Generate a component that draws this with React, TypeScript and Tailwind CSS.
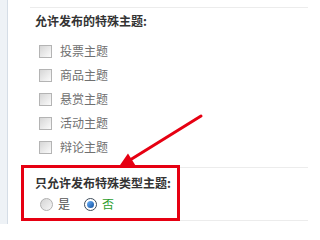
import React from 'react';

const topics = ['投票主题', '商品主题', '悬赏主题', '活动主题', '辩论主题'];

const Checkbox = () => (
  <span className="inline-block w-[13px] h-[13px] border border-[#b4b4b4] bg-gradient-to-br from-[#d6d6d6] to-[#fbfbfb] shrink-0" />
);

const Radio = ({ checked }: { checked?: boolean }) => (
  <span
    className={`flex items-center justify-center w-[13px] h-[13px] rounded-full border shrink-0 ${
      checked ? 'border-[#3d4b5a] bg-white' : 'border-[#b0b0b0] bg-gradient-to-br from-[#d4d4d4] to-[#f7f7f7]'
    }`}
  >
    {checked && <span className="block w-[7px] h-[7px] rounded-full bg-gradient-to-br from-[#6fb6ff] to-[#0b4f9e]" />}
  </span>
);

export default function App() {
  return (
    <div
      className="relative w-[308px] h-[224px] overflow-hidden bg-white flex"
      style={{ fontFamily: '"Noto Sans CJK SC", "Noto Sans", sans-serif' }}
    >
      <div className="w-[8px] h-full bg-[#eef2f6] border-r border-[#d5dde6]" />
      <div className="flex-1 ml-[22px] pt-[7px]">
        <div className="border-t border-[#ececec] pl-[5px] pt-[5px]">
          <div className="h-[16px] leading-[16px] text-[12px] font-bold text-[#333]">允许发布的特殊主题:</div>
          <div className="mt-[10px] pl-[4px]">
            {topics.map((t) => (
              <div key={t} className="h-[24px] flex items-center gap-[8px]">
                <Checkbox />
                <span className="text-[12px] text-[#707070]">{t}</span>
              </div>
            ))}
          </div>
        </div>
        <div className="mt-[8px] border-t border-b border-[#ececec] h-[54px] pl-[5px] pt-[7px]">
          <div className="h-[16px] leading-[16px] text-[12px] font-bold text-[#333]">只允许发布特殊类型主题:</div>
          <div className="mt-[5px] pl-[5px] h-[16px] flex items-center">
            <Radio />
            <span className="ml-[5px] text-[12px] text-[#555]">是</span>
            <span className="ml-[14px]">
              <Radio checked />
            </span>
            <span className="ml-[5px] text-[12px] text-[#2e9e2e]">否</span>
          </div>
        </div>
      </div>

      <div className="absolute left-[21px] top-[165px] w-[159px] h-[56px] border-[3px] border-[#e60012]" />

      <svg className="absolute inset-0 pointer-events-none" width="308" height="224" viewBox="0 0 308 224">
        <line x1="201" y1="116" x2="130" y2="160" stroke="#e60012" strokeWidth="3" strokeLinecap="round" />
        <polygon points="118,168 135.5,165.5 128,153.5" fill="#e60012" />
      </svg>
    </div>
  );
}
